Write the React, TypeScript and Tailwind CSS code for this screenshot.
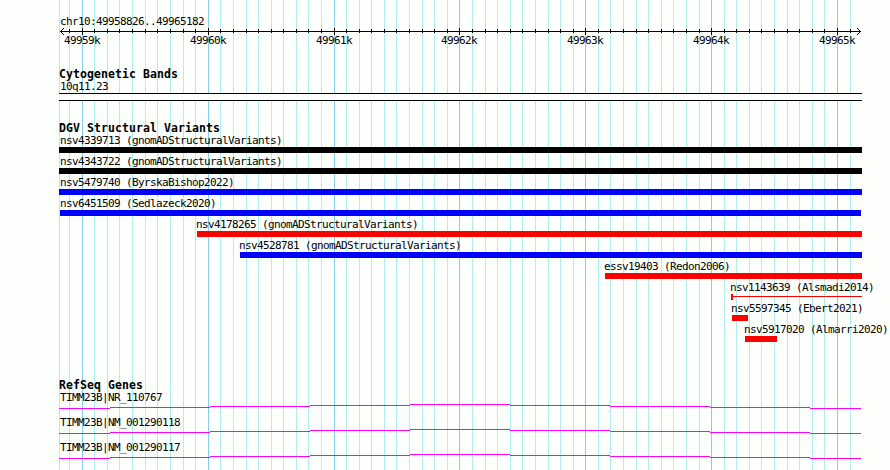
const MAJOR = [
  { x: 82, label: '49959k' },
  { x: 208, label: '49960k' },
  { x: 334, label: '49961k' },
  { x: 459, label: '49962k' },
  { x: 585, label: '49963k' },
  { x: 711, label: '49964k' },
  { x: 837, label: '49965k' },
];

const MINOR = [
  69, 94, 107, 119, 132, 145, 157, 170, 183, 195, 220, 233, 246, 258, 271, 283, 296, 308, 321,
  346, 359, 371, 384, 396, 409, 422, 434, 447, 472, 485, 497, 510, 522, 535, 548, 560, 573,
  598, 610, 623, 636, 648, 661, 673, 686, 699, 724, 736, 749, 761, 774, 787, 799, 812, 824, 850,
];

interface Variant {
  name: string;
  labelX: number;
  start: number;
  end: number;
  color: string;
  thin?: boolean;
}

const VARIANTS: Variant[] = [
  { name: 'nsv4339713 (gnomADStructuralVariants)', labelX: 60, start: 59, end: 862, color: 'bg-black' },
  { name: 'nsv4343722 (gnomADStructuralVariants)', labelX: 60, start: 59, end: 862, color: 'bg-black' },
  { name: 'nsv5479740 (ByrskaBishop2022)', labelX: 60, start: 59, end: 862, color: 'bg-[#0000ff]' },
  { name: 'nsv6451509 (Sedlazeck2020)', labelX: 60, start: 60, end: 861, color: 'bg-[#0000ff]' },
  { name: 'nsv4178265 (gnomADStructuralVariants)', labelX: 196, start: 197, end: 862, color: 'bg-[#ff0000]' },
  { name: 'nsv4528781 (gnomADStructuralVariants)', labelX: 239, start: 240, end: 862, color: 'bg-[#0000ff]' },
  { name: 'essv19403 (Redon2006)', labelX: 604, start: 605, end: 862, color: 'bg-[#ff0000]' },
  { name: 'nsv1143639 (Alsmadi2014)', labelX: 730, start: 731, end: 862, color: 'bg-[#ff0000]', thin: true },
  { name: 'nsv5597345 (Ebert2021)', labelX: 731, start: 732, end: 748, color: 'bg-[#ff0000]' },
  { name: 'nsv5917020 (Almarri2020)', labelX: 744, start: 745, end: 777, color: 'bg-[#ff0000]' },
];

const GENES = ['TIMM23B|NR_110767', 'TIMM23B|NM_001290118', 'TIMM23B|NM_001290117'];

// Intron line steps, relative to the top of each gene glyph
const INTRON = [
  { from: 59, to: 110, y: 4 },
  { from: 110, to: 210, y: 3 },
  { from: 210, to: 310, y: 2 },
  { from: 310, to: 410, y: 1 },
  { from: 410, to: 510, y: 0 },
  { from: 510, to: 610, y: 1 },
  { from: 610, to: 710, y: 2 },
  { from: 710, to: 810, y: 3 },
  { from: 810, to: 861, y: 4 },
];

function GridLines() {
  return (
    <svg className="absolute inset-0 -z-10" width="890" height="470" shapeRendering="crispEdges">
      {[59, ...MINOR].map(x => (
        <rect key={x} x={x} y={0} width={1} height={470} fill="#afeeee" />
      ))}
      {MAJOR.map(({ x }) => (
        <rect key={x} x={x} y={0} width={1} height={470} fill="#87ceeb" />
      ))}
    </svg>
  );
}

function Ruler() {
  return (
    <svg className="block" width="890" height="20" shapeRendering="crispEdges">
      <rect x={60} y={3} width={801} height={1} />
      {MINOR.map(x => (
        <rect key={x} x={x} y={1} width={1} height={4} />
      ))}
      {MAJOR.map(({ x }) => (
        <rect key={x} x={x} y={0} width={1} height={7} />
      ))}
      {/* Arrow heads */}
      {[-3, -2, -1, 1, 2, 3].map(d => (
        <g key={d}>
          <rect x={60 + Math.abs(d)} y={3 + d} width={1} height={1} />
          <rect x={860 - Math.abs(d)} y={3 + d} width={1} height={1} />
        </g>
      ))}
      {MAJOR.map(({ x, label }) => (
        <text key={x} x={x - 18} y={16}>
          {label}
        </text>
      ))}
    </svg>
  );
}

function TrackTitle({ children }: { children: string }) {
  return (
    <h2 className="h-3 pl-[59px] text-[11.5px] leading-[13px] font-bold tracking-[0.077px]">
      {children}
    </h2>
  );
}

function VariantRow({ variant }: { variant: Variant }) {
  const { name, labelX, start, end, color, thin } = variant;
  return (
    <div className="h-[21px]">
      <div className="h-[13px]" style={{ paddingLeft: labelX }}>
        {name}
      </div>
      {thin ? (
        <div className="flex h-1.5" style={{ marginLeft: start, width: end - start }}>
          <div className={`w-0.5 ${color}`} />
          <div className={`mt-0.5 h-px flex-1 ${color}`} />
        </div>
      ) : (
        <div className={`h-1.5 ${color}`} style={{ marginLeft: start, width: end - start }} />
      )}
    </div>
  );
}

function GeneRow({ name }: { name: string }) {
  return (
    <div className="h-[25px]">
      <div className="h-[13px] pl-[60px]">{name}</div>
      <svg className="block" width="890" height="5" shapeRendering="crispEdges">
        {INTRON.map(s => (
          <rect key={s.from} x={s.from} y={s.y} width={s.to - s.from} height={1} fill="#ff00ff" />
        ))}
      </svg>
    </div>
  );
}

export default function App() {
  return (
    <main className="relative isolate h-[470px] w-[890px] overflow-hidden bg-[#fdfffc] pt-[15px] font-['DejaVu_Sans_Mono',monospace] text-[11px] leading-[13px] tracking-[-0.622px] whitespace-pre text-black">
      <GridLines />
      <div className="h-[13px] pl-[60px]">chr10:49958826..49965182</div>
      <Ruler />

      <section className="mt-5">
        <TrackTitle>Cytogenetic Bands</TrackTitle>
        <div className="h-[13px] pl-[60px]">10q11.23</div>
        <div className="ml-[59px] h-2 w-[803px] border-y border-black bg-[#fdfffc]" />
      </section>

      <section className="mt-[21px]">
        <TrackTitle>DGV Structural Variants</TrackTitle>
        {VARIANTS.map(variant => (
          <VariantRow key={variant.name} variant={variant} />
        ))}
      </section>

      <section className="mt-[35px]">
        <TrackTitle>RefSeq Genes</TrackTitle>
        {GENES.map(name => (
          <GeneRow key={name} name={name} />
        ))}
      </section>
    </main>
  );
}
